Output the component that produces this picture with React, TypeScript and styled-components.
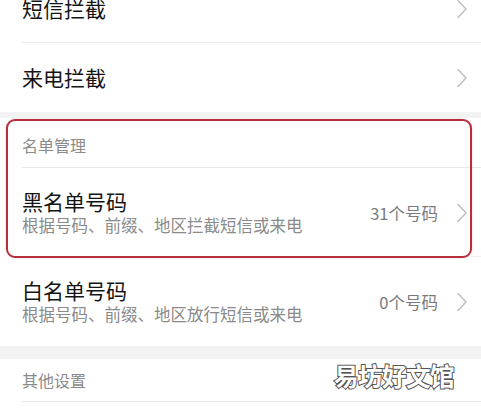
import React from 'react'
import styled, { createGlobalStyle } from 'styled-components'

const GlobalStyle = createGlobalStyle`
  html, body {
    margin: 0;
    padding: 0;
    background: #fff;
    overflow: hidden;
  }
  body {
    font-family: "Noto Sans CJK SC", "Noto Sans", sans-serif;
  }
`

const Chevron = () => (
  <svg width="10" height="20" viewBox="0 0 10 20" fill="none">
    <path d="M1 1.5 L9 10 L1 18.5" stroke="#bdbdbd" strokeWidth="1.4" strokeLinecap="round" strokeLinejoin="round" />
  </svg>
)

type RowItem = { title: string; desc?: string; count?: string }

const App = () => {
  const blockItems: RowItem[] = [{ title: '短信拦截' }, { title: '来电拦截' }]
  const listItems: RowItem[] = [
    { title: '黑名单号码', desc: '根据号码、前缀、地区拦截短信或来电', count: '31个号码' },
    { title: '白名单号码', desc: '根据号码、前缀、地区放行短信或来电', count: '0个号码' },
  ]

  return (
    <Page>
      <GlobalStyle />
      <Card $offset={-26}>
        {blockItems.map((item, i) => (
          <SimpleRow key={item.title} $divider={i < blockItems.length - 1}>
            <Title>{item.title}</Title>
            <Chevron />
          </SimpleRow>
        ))}
      </Card>
      <Gap $h={6} />
      <Card>
        <SectionHeader $h={50} $top={16}>名单管理</SectionHeader>
        {listItems.map((item, i) => (
          <DetailRow key={item.title} $divider={i < listItems.length - 1}>
            <TextCol>
              <Title>{item.title}</Title>
              <Desc>{item.desc}</Desc>
            </TextCol>
            <Right>
              <Count>{item.count}</Count>
              <Chevron />
            </Right>
          </DetailRow>
        ))}
      </Card>
      <Gap $h={13} />
      <Card>
        <SectionHeader $h={43} $top={10}>其他设置</SectionHeader>
      </Card>
      <Highlight />
      <Watermark>易坊好文馆</Watermark>
    </Page>
  )
}

export default App

const Page = styled.div`
  position: relative;
  width: 481px;
  height: 408px;
  overflow: hidden;
  background: #fff;
`

const Card = styled.div<{ $offset?: number }>`
  background: #fff;
  display: flex;
  flex-direction: column;
  margin-top: ${(p) => p.$offset ?? 0}px;
`

const Gap = styled.div<{ $h: number }>`
  height: ${(p) => p.$h}px;
  background: #f3f3f3;
`

const SimpleRow = styled.div<{ $divider?: boolean }>`
  height: 69px;
  box-sizing: border-box;
  display: flex;
  align-items: center;
  justify-content: space-between;
  padding: 0 14px 0 22px;
  position: relative;
  &::after {
    content: '';
    display: ${(p) => (p.$divider ? 'block' : 'none')};
    position: absolute;
    left: 22px;
    right: 0;
    bottom: 0;
    height: 1px;
    background: #ededed;
  }
`

const DetailRow = styled(SimpleRow)`
  height: 89px;
`

const SectionHeader = styled.div<{ $h: number; $top: number }>`
  height: ${(p) => p.$h}px;
  box-sizing: border-box;
  padding: ${(p) => p.$top}px 0 0 22px;
  font-size: 16px;
  line-height: 22px;
  color: #8a8a8a;
  position: relative;
  &::after {
    content: '';
    position: absolute;
    left: 22px;
    right: 0;
    bottom: 0;
    height: 1px;
    background: #e6e6e6;
  }
`

const TextCol = styled.div`
  display: flex;
  flex-direction: column;
`

const Title = styled.div`
  font-size: 21px;
  line-height: 25px;
  color: #141414;
`

const Desc = styled.div`
  font-size: 16.5px;
  line-height: 22px;
  color: #8a8a8a;
`

const Right = styled.div`
  display: flex;
  align-items: center;
  gap: 19px;
`

const Count = styled.span`
  font-size: 16.5px;
  line-height: 22px;
  color: #7a7a7a;
`

const Highlight = styled.div`
  position: absolute;
  left: 6px;
  top: 119px;
  width: 466px;
  height: 139px;
  box-sizing: border-box;
  border: 2.5px solid #b52f3b;
  border-radius: 9px;
  box-shadow: 0 0 2px rgba(220, 90, 100, 0.35);
  pointer-events: none;
`

const Watermark = styled.div`
  position: absolute;
  left: 334px;
  top: 362px;
  font-size: 24.5px;
  line-height: 28px;
  font-weight: 700;
  color: #fff;
  -webkit-text-stroke: 2px #555;
  paint-order: stroke fill;
  letter-spacing: -0.5px;
`
